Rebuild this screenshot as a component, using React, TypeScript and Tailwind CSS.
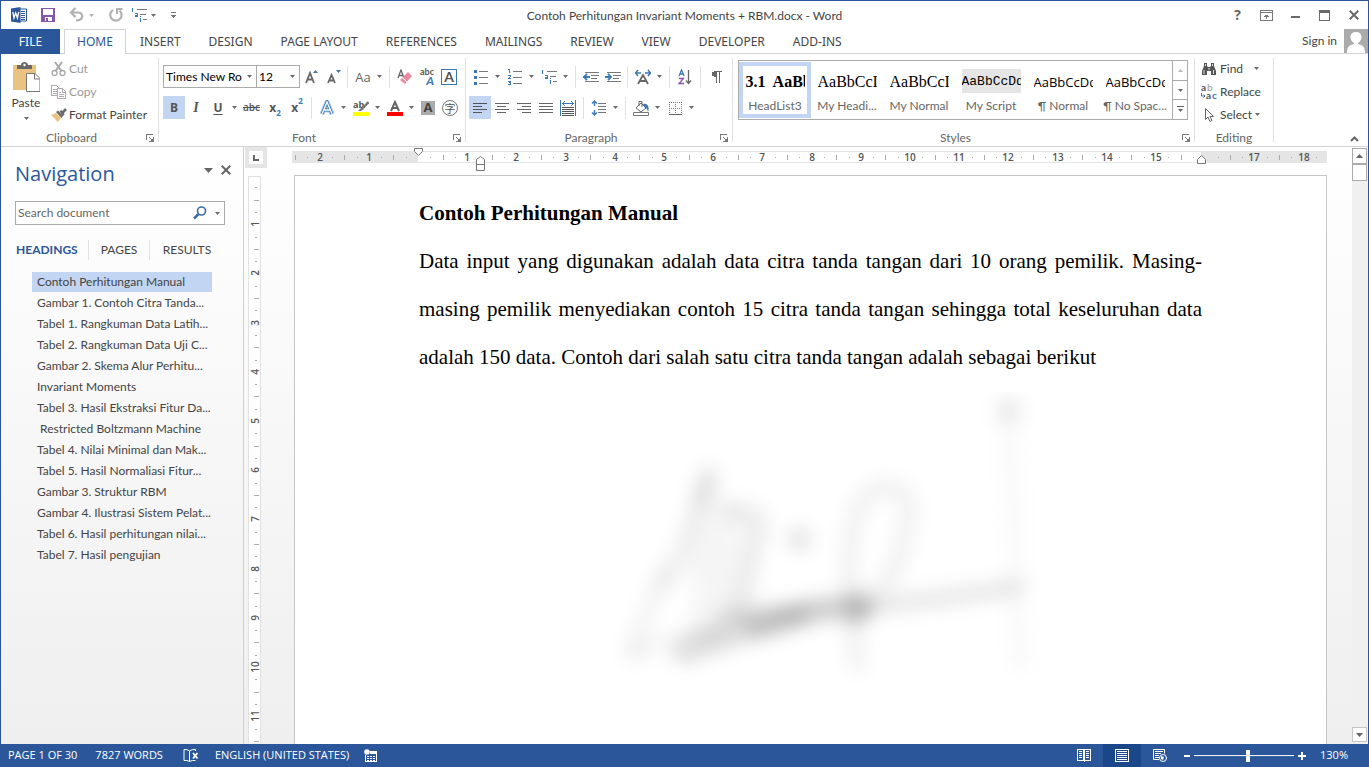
import type { ReactNode } from "react";
import { clsx } from "clsx";

const menuTabs = [
	"INSERT",
	"DESIGN",
	"PAGE LAYOUT",
	"REFERENCES",
	"MAILINGS",
	"REVIEW",
	"VIEW",
	"DEVELOPER",
	"ADD-INS",
];

const headings = [
	"Contoh Perhitungan Manual",
	"Gambar 1. Contoh Citra Tanda...",
	"Tabel 1. Rangkuman Data Latih...",
	"Tabel 2. Rangkuman Data Uji C...",
	"Gambar 2. Skema Alur Perhitu...",
	"Invariant Moments",
	"Tabel 3. Hasil Ekstraksi Fitur Da...",
	" Restricted Boltzmann Machine",
	"Tabel 4. Nilai Minimal dan Mak...",
	"Tabel 5. Hasil Normaliasi Fitur...",
	"Gambar 3. Struktur RBM",
	"Gambar 4. Ilustrasi Sistem Pelat...",
	"Tabel 6. Hasil perhitungan nilai...",
	"Tabel 7. Hasil pengujian",
];

const styleItems = [
	{ name: "HeadList3", sample: "3.1  AaBbCc", look: "font-['Liberation_Serif',serif] text-base font-bold" },
	{ name: "My Headi...", sample: "AaBbCcI", look: "font-['Liberation_Serif',serif] text-base" },
	{ name: "My Normal", sample: "AaBbCcI", look: "font-['Liberation_Serif',serif] text-base" },
	{ name: "My Script", sample: "AaBbCcDd", look: "font-['Liberation_Mono',monospace] text-[13px] bg-[#e5e5e5]" },
	{ name: "¶ Normal", sample: "AaBbCcDd", look: "font-['Open_Sans',sans-serif] text-[13px]" },
	{ name: "¶ No Spac...", sample: "AaBbCcDd", look: "font-['Open_Sans',sans-serif] text-[13px]" },
];

function Pic({ children, w = 16, h = 16, crisp = true }: { children: ReactNode; w?: number; h?: number; crisp?: boolean }) {
	return (
		<svg
			width={w}
			height={h}
			viewBox={`0 0 ${w} ${h}`}
			fill="none"
			className="shrink-0"
			shapeRendering={crisp ? "crispEdges" : "auto"}
			aria-hidden="true"
		>
			{children}
		</svg>
	);
}

function Caret({ color = "#6a6a6a" }: { color?: string }) {
	return (
		<Pic w={5} h={3} crisp={false}>
			<path d="M0 0h5L2.5 3z" fill={color} />
		</Pic>
	);
}

function Sep() {
	return <div className="h-[22px] w-px bg-[#e1e1e1]" />;
}

function Tool({ label, active, children }: { label: string; active?: boolean; children: ReactNode }) {
	return (
		<button
			aria-label={label}
			className={clsx("flex h-[23px] w-[22px] items-center justify-center", active && "bg-[#c2d5f2]")}
		>
			{children}
		</button>
	);
}

function SplitTool({ label, children }: { label: string; children: ReactNode }) {
	return (
		<button aria-label={label} className="flex h-[23px] w-[34px] items-center justify-center gap-1.5">
			{children}
			<Caret />
		</button>
	);
}

function Group({ label, launcher = true, className, children }: { label: string; launcher?: boolean; className?: string; children: ReactNode }) {
	return (
		<>
			<section className={clsx("flex flex-col justify-between", className)}>
				{children}
				<div className="flex h-4 items-center">
					<span className="flex-1 text-center leading-4 text-[#666]">{label}</span>
					{launcher && (
						<button aria-label={`${label} settings`} className="flex w-4 justify-center">
							<Pic w={8} h={8}>
								<path d="M.5 6V.5H7M3 3l3 3M7.500 3v4.500H3" stroke="#777" />
								<path d="M4 7h3V4z" fill="#777" />
							</Pic>
						</button>
					)}
				</div>
			</section>
			<div className="my-1 w-px bg-[#e1e1e1]" />
		</>
	);
}

function MultiLevelIcon() {
	return (
		<Pic>
			<path d="M6 2.500h10M9 7.500h6M12 12.500h4" stroke="#777" />
			<path d="M1 1.500h1M1.500 1v4M4 6.500h3M6.500 7v3M4 8.500h2M4 9.500h3M9.500 11v4M9.500 9v1" stroke="#3c78b4" />
		</Pic>
	);
}

function TitleBar() {
	return (
		<header className="grid h-7 grid-cols-[1fr_auto_1fr] items-center">
			<div className="flex items-center pl-2.5">
				<Pic crisp={false}>
					<path d="M7 2h8.500v12H7z" fill="#fff" stroke="#2b579a" />
					<path d="M10 4.500h4M10 6.500h4M10 8.500h4M10 10.500h4M10 12.500h4" stroke="#2b579a" />
					<path d="M0 1.500L9.500 0v16L0 14.500z" fill="#2b579a" />
					<path d="M1.800 5l1.200 6 1.700-5 1.700 5 1.300-6" stroke="#fff" strokeWidth="1.300" />
				</Pic>
				<button aria-label="Save" className="ml-[13px]">
					<Pic>
						<path d="M1 1h14v14H1z" fill="#8657a8" />
						<path d="M3 2h10v6H3zM5 10h7v4H8v-3H6v3H5z" fill="#fff" />
					</Pic>
				</button>
				<button aria-label="Undo" className="ml-[13px] flex items-center gap-1">
					<Pic crisp={false}>
						<path d="M6.500 1L2 5.500 6.500 10M2.500 5.500H9c6 0 6 7.500-2 8" stroke="#b2b2b2" strokeWidth="2.200" />
					</Pic>
					<Caret color="#b2b2b2" />
				</button>
				<button aria-label="Repeat" className="ml-3.5">
					<Pic crisp={false}>
						<path d="M11.500 3.500A5.700 5.700 0 1 1 5 3" stroke="#b2b2b2" strokeWidth="2.200" />
						<path d="M9 1v6M8.500 2h6" stroke="#b2b2b2" strokeWidth="2" />
					</Pic>
				</button>
				<button aria-label="Multilevel list" className="ml-[7px] flex items-center gap-1">
					<MultiLevelIcon />
					<Caret />
				</button>
				<button aria-label="Customize toolbar" className="ml-[15px]">
					<Pic w={5} h={6}>
						<path d="M0 .5h5" stroke="#777" />
						<path d="M0 3h5L2.500 6z" fill="#777" />
					</Pic>
				</button>
			</div>
			<h1 className="pt-0.5 text-[#444]">Contoh Perhitungan Invariant Moments + RBM.docx - Word</h1>
			<div className="flex justify-end text-[#666]">
				<button aria-label="Help" className="w-[29px] font-['Open_Sans',sans-serif] text-sm font-bold">
					?
				</button>
				<button aria-label="Ribbon display options" className="flex w-[29px] items-center justify-center">
					<Pic w={13} h={11}>
						<path d="M.5.5h12v10H.5zM0 2.500h13M6.500 5v4M4 6.500h5M5 5.500h3" stroke="#777" />
					</Pic>
				</button>
				<button aria-label="Minimize" className="flex w-[29px] items-center justify-center">
					<Pic w={9} h={11}>
						<path d="M0 7h9" stroke="#6a6a6a" strokeWidth="2" />
					</Pic>
				</button>
				<button aria-label="Maximize" className="flex w-[29px] items-center justify-center">
					<Pic w={11} h={11}>
						<path d="M.5 1v9.500h10V1" stroke="#6a6a6a" />
						<path d="M0 1.500h11" stroke="#6a6a6a" strokeWidth="3" />
					</Pic>
				</button>
				<button aria-label="Close" className="flex w-[29px] items-center justify-center">
					<Pic w={10} h={10} crisp={false}>
						<path d="M.7.7l8.600 8.600M9.300.7L.7 9.300" stroke="#6a6a6a" strokeWidth="2" />
					</Pic>
				</button>
			</div>
		</header>
	);
}

function MenuTabs() {
	return (
		<nav className="flex h-[25px] items-stretch font-['Noto_Sans',sans-serif] text-[#444]">
			<button className="w-[59px] bg-[#2b579a] text-white">FILE</button>
			<div className="w-1 border-b border-[#d4d4d4]" />
			<button className="w-[62px] border border-b-0 border-[#d4d4d4] text-[#2b579a]">HOME</button>
			<div className="flex flex-1 items-stretch border-b border-[#d4d4d4]">
				{menuTabs.map((tab) => (
					<button key={tab} className="px-3.5 pt-px">
						{tab}
					</button>
				))}
				<a href="#signin" className="ml-auto self-center pr-[7px] font-['Lato',sans-serif]">
					Sign in
				</a>
				<svg width="24" height="24" viewBox="0 0 24 24" aria-hidden="true">
					<path d="M0 0h24v24H0z" fill="#ababab" />
					<path d="M3 24c0-6 2-8 7-9v-1C5 11 5 3 12 3s7 8 2 11v1c5 1 7 3 7 9z" fill="#fff" />
				</svg>
			</div>
		</nav>
	);
}

function ClipboardGroup() {
	return (
		<Group label="Clipboard" className="w-[157px]">
			<div className="flex pt-[3px]">
				<button className="flex w-[50px] flex-col items-center pt-[5px]">
					<Pic w={28} h={31} crisp={false}>
						<path d="M1 3h23v25H1z" fill="#eac282" />
						<path d="M5 7V3h4c0-4 7-4 7 0h4v4z" fill="#6a6a6a" />
						<circle cx="12.500" cy="3" r="1.200" fill="#fff" />
						<path d="M14.500 11.500h8.500l5 5v13H14.500z" fill="#fff" stroke="#777" />
						<path d="M22.500 12v5h5" stroke="#777" />
					</Pic>
					<span className="mt-0.5 mb-1.5 leading-4">Paste</span>
					<Caret />
				</button>
				<div className="flex flex-col items-start">
					<button className="flex h-[23px] items-center gap-0.5 text-[#999]">
						<Pic crisp={false}>
							<path d="M4 1l6.500 9M11 1L4.500 10" stroke="#a8a8a8" strokeWidth="2" />
							<circle cx="3.500" cy="12" r="2.500" stroke="#a8a8a8" strokeWidth="1.300" />
							<circle cx="11.500" cy="12" r="2.500" stroke="#a8a8a8" strokeWidth="1.300" />
						</Pic>
						Cut
					</button>
					<button className="flex h-[23px] items-center gap-0.5 text-[#999]">
						<Pic>
							<path d="M.5 1.500h5l3 3v7h-8zM2 5.500h4M2 7.500h4M2 9.500h4" stroke="#b5a8b5" />
							<path d="M6.500 4.500h5l3 3v7h-8z" fill="#fff" stroke="#b5a8b5" />
							<path d="M11.500 5v3h3M8 8.500h2M8 10.500h5M8 12.500h5" stroke="#b5a8b5" />
						</Pic>
						Copy
					</button>
					<button className="flex h-[23px] items-center gap-0.5">
						<Pic crisp={false}>
							<path d="M0 8l5-2 5 5-3 4z" fill="#eac282" />
							<path d="M5 5l2-1.500L12 9l-1.500 2zM8.500 4.500L10 3l1.500 1L14 1l2 2-3 3 .5 1.500L12 9z" fill="#6a6a6a" />
						</Pic>
						Format Painter
					</button>
				</div>
			</div>
		</Group>
	);
}

function FontGroup() {
	return (
		<Group label="Font" className="w-[306px]">
			<div className="flex flex-col gap-2 pt-[11px] pl-1">
				<div className="flex items-center">
					<div className="relative">
						<select aria-label="Font name" className="h-[23px] w-[94px] appearance-none border border-[#ababab] bg-white pr-3.5 pl-0.5 text-black">
							<option>Times New Roman</option>
						</select>
						<span className="pointer-events-none absolute inset-y-0 right-[5px] flex items-center">
							<Caret />
						</span>
					</div>
					<div className="relative -ml-px">
						<select aria-label="Font size" className="h-[23px] w-[44px] appearance-none border border-[#ababab] bg-white pr-3.5 pl-0.5 text-black">
							<option>12</option>
						</select>
						<span className="pointer-events-none absolute inset-y-0 right-[5px] flex items-center">
							<Caret />
						</span>
					</div>
					<Tool label="Grow font">
						<Pic crisp={false}>
							<path d="M3 14L7 4l4 10M4.500 10.500h5" stroke="#666" strokeWidth="1.800" />
							<path d="M10 4l2.500-3L15 4z" fill="#3c78b4" />
						</Pic>
					</Tool>
					<Tool label="Shrink font">
						<Pic crisp={false}>
							<path d="M3 14l3.500-8L10 14M4.500 11.500h4" stroke="#666" strokeWidth="1.800" />
							<path d="M11 1h5l-2.500 3z" fill="#3c78b4" />
						</Pic>
					</Tool>
					<div className="w-[3px]" />
					<Sep />
					<button aria-label="Change case" className="flex w-[41px] items-center justify-center gap-1.5 font-['Open_Sans',sans-serif] text-[13px] leading-5 text-[#666]">
						Aa
						<Caret />
					</button>
					<Sep />
					<div className="w-1" />
					<Tool label="Clear formatting">
						<Pic crisp={false}>
							<path d="M1 9l3-8 3 8M2 6.500h4" stroke="#666" strokeWidth="1.300" />
							<path d="M11 3l4 4-7 8-5-4z" fill="#e88ba0" />
							<path d="M5 8.500l5 4.500" stroke="#fff" />
						</Pic>
					</Tool>
					<Tool label="Phonetic guide">
						<span className="flex flex-col items-end text-[#555]">
							<span className="text-[9px] leading-[8px] font-bold">abc</span>
							<b className="text-xs leading-[10px] text-[#3c78b4] italic">A</b>
						</span>
					</Tool>
					<Tool label="Character border">
						<span className="flex size-4 items-center justify-center border border-[#3c78b4] text-sm font-bold text-[#555]">A</span>
					</Tool>
				</div>
				<div className="flex items-center font-['Open_Sans',sans-serif] text-[#555]">
					<Tool label="Bold" active>
						<b className="text-xs">B</b>
					</Tool>
					<Tool label="Italic">
						<i className="font-['Liberation_Serif',serif] text-sm font-bold">I</i>
					</Tool>
					<Tool label="Underline">
						<b className="text-xs underline underline-offset-2">U</b>
					</Tool>
					<button aria-label="Underline style" className="flex w-2.5 justify-center">
						<Caret />
					</button>
					<button className="w-[25px] text-[10px] font-semibold line-through">abc</button>
					<Tool label="Subscript">
						<b className="text-xs">x</b>
						<b className="self-end text-[8px] text-[#3c78b4]">2</b>
					</Tool>
					<Tool label="Superscript">
						<b className="text-xs">x</b>
						<b className="self-start text-[8px] text-[#3c78b4]">2</b>
					</Tool>
					<div className="w-[3px]" />
					<Sep />
					<div className="w-[3px]" />
					<SplitTool label="Text effects">
						<Pic crisp={false}>
							<path d="M3 14L8 2l5 12M5 10h6" stroke="#b4cdea" strokeWidth="5" />
							<path d="M3 14L8 2l5 12M5 10h6" stroke="#3c78b4" strokeWidth="3" />
							<path d="M3 14L8 2l5 12M5 10h6" stroke="#fff" strokeWidth="1.300" />
						</Pic>
					</SplitTool>
					<SplitTool label="Highlight color">
						<Pic crisp={false}>
							<text x="0" y="8" fontSize="9" fontWeight="700" fill="#555">
								ab
							</text>
							<path d="M15.500 2L10 8" stroke="#777" strokeWidth="2.500" />
							<path d="M5 11l4-4 2 2-3 2z" fill="#777" />
							<path d="M0 12h16v4H0z" fill="#ff0" />
						</Pic>
					</SplitTool>
					<SplitTool label="Font color">
						<Pic crisp={false}>
							<path d="M4 11l4-9 4 9M5.500 8h5" stroke="#666" strokeWidth="2" />
							<path d="M0 12h16v4H0z" fill="#f00" />
						</Pic>
					</SplitTool>
					<Tool label="Character shading">
						<span className="flex size-3.5 items-center justify-center bg-[#ababab] text-[13px] font-bold text-[#444]">A</span>
					</Tool>
					<Tool label="Enclose characters">
						<span className="flex size-4 items-center justify-center rounded-full border border-[#777] font-['Noto_Sans_CJK_SC',sans-serif] text-[11px] leading-3">
							字
						</span>
					</Tool>
				</div>
			</div>
		</Group>
	);
}

function ParagraphGroup() {
	return (
		<Group label="Paragraph" className="w-[266px]">
			<div className="flex flex-col gap-2 pt-[11px] pl-[3px]">
				<div className="flex items-center">
					<SplitTool label="Bullets">
						<Pic>
							<path d="M6 2.500h9M6 8.500h9M6 14.500h9" stroke="#777" />
							<path d="M1 1h3v3H1zM1 7h3v3H1zM1 13h3v3H1z" fill="#3c78b4" />
						</Pic>
					</SplitTool>
					<SplitTool label="Numbering">
						<Pic>
							<path d="M6 2.500h9M6 8.500h9M6 14.500h9" stroke="#777" />
							<path d="M1 .5h1M2.500 0v4M1 6.500h3M3.500 7v1M2.500 8v1M1 9.500h3M1 12.500h3M3.500 12v4M2 13.500h1M1 15.500h3" stroke="#3c78b4" />
						</Pic>
					</SplitTool>
					<SplitTool label="Multilevel list">
						<MultiLevelIcon />
					</SplitTool>
					<div className="w-1" />
					<Sep />
					<div className="w-1" />
					<Tool label="Decrease indent">
						<Pic crisp={false}>
							<path d="M2 3.500h14M8 6.500h8M8 9.500h6M2 12.500h14" stroke="#777" />
							<path d="M0 8h7M4 4.800L1 8l3 3.200" stroke="#3c78b4" strokeWidth="1.800" />
						</Pic>
					</Tool>
					<Tool label="Increase indent">
						<Pic crisp={false}>
							<path d="M2 3.500h14M8 6.500h8M8 9.500h6M2 12.500h14" stroke="#777" />
							<path d="M0 8h6M3 4.800L6 8l-3 3.200" stroke="#3c78b4" strokeWidth="1.800" />
						</Pic>
					</Tool>
					<div className="w-[3px]" />
					<Sep />
					<div className="w-[3px]" />
					<SplitTool label="Asian layout">
						<Pic crisp={false}>
							<path d="M3 15l5-9 5 9M5 12h6" stroke="#666" strokeWidth="1.800" />
							<path d="M0 4h6M3 1L.5 4 3 7M10 4h6M13 1l2.500 3L13 7" stroke="#3c78b4" strokeWidth="1.400" />
						</Pic>
					</SplitTool>
					<div className="w-1" />
					<Sep />
					<button aria-label="Sort" className="flex w-[30px] justify-center">
						<Pic crisp={false}>
							<path d="M2 7l2.500-6L7 7M3 5h3" stroke="#3c78b4" strokeWidth="1.300" />
							<path d="M2 9.500h4.500L2 14.500h5" stroke="#8657a8" strokeWidth="1.300" />
							<path d="M11.500 1v13M9 11.500l2.500 3 2.500-3" stroke="#666" strokeWidth="1.300" />
						</Pic>
					</button>
					<Sep />
					<button aria-label="Show paragraph marks" className="flex w-[30px] justify-center">
						<Pic>
							<path d="M6 2h8v1H6z" fill="#666" />
							<path d="M8.500 2v12M11.500 2v12" stroke="#666" />
							<path d="M8 2v6C2 8 2 2 8 2z" fill="#666" />
						</Pic>
					</button>
				</div>
				<div className="flex items-center">
					<Tool label="Align left" active>
						<Pic>
							<path d="M1 3.500h14M1 6.500h9M1 9.500h14M1 12.500h9" stroke="#555" />
						</Pic>
					</Tool>
					<Tool label="Center">
						<Pic>
							<path d="M1 3.500h14M3 6.500h9M1 9.500h14M3 12.500h9" stroke="#666" />
						</Pic>
					</Tool>
					<Tool label="Align right">
						<Pic>
							<path d="M1 3.500h14M6 6.500h9M1 9.500h14M6 12.500h9" stroke="#666" />
						</Pic>
					</Tool>
					<Tool label="Justify">
						<Pic>
							<path d="M1 3.500h14M1 6.500h14M1 9.500h14M1 12.500h14" stroke="#666" />
						</Pic>
					</Tool>
					<Tool label="Distribute">
						<Pic>
							<path d="M.5 0v16M15.500 0v16M3 3.500h10M5 1L3 3.500 5 6M11 1l2 2.500L11 6" stroke="#3c78b4" />
							<path d="M2 7.500h12M2 9.500h12M2 11.500h12M2 13.500h12M2 15.500h12" stroke="#555" />
						</Pic>
					</Tool>
					<div className="w-1" />
					<Sep />
					<div className="w-[3px]" />
					<SplitTool label="Line spacing">
						<Pic crisp={false}>
							<path d="M7 3.500h8M7 6.500h8M7 9.500h8M7 12.500h8" stroke="#777" />
							<path d="M3.500 1v5M3.500 10v5M1 3.500L3.500 1 6 3.500M1 12.500L3.500 15 6 12.500" stroke="#3c78b4" strokeWidth="1.400" />
						</Pic>
					</SplitTool>
					<div className="w-1" />
					<Sep />
					<div className="w-[3px]" />
					<SplitTool label="Shading">
						<Pic crisp={false}>
							<path d="M3 8l5-5 5 5-5 4zM6 6V1.500h3V7" stroke="#666" />
							<path d="M10 4c4-1 7 2 5 8-1-3-1-4-3-4z" fill="#3c78b4" />
							<path d="M.5 12.500h15v3H.5z" fill="#fff" stroke="#777" />
						</Pic>
					</SplitTool>
					<SplitTool label="Borders">
						<Pic>
							<path d="M2 2.500h13M2 8.500h13M2.500 2v12M8.500 2v12M14.500 2v12" stroke="#777" strokeDasharray="1 1" />
							<path d="M2 14.500h13" stroke="#666" />
						</Pic>
					</SplitTool>
				</div>
			</div>
		</Group>
	);
}

function StylesGroup() {
	return (
		<Group label="Styles" className="w-[461px]">
			<div className="px-[5px] pt-1.5">
				<div className="flex h-[60px] w-[450px] border border-[#ababab]">
					{styleItems.map((item, i) => (
						<button
							key={item.name}
							className={clsx(
								"my-px flex w-[72px] flex-col items-center border-4 px-[3px] pt-[3px]",
								i === 0 ? "border-[#c2d5f2]" : "border-transparent",
							)}
						>
							<span className={clsx("h-[26px] w-[59px] overflow-hidden leading-[26px] whitespace-pre text-black", item.look)}>
								{item.sample}
							</span>
							<span className="mt-[5px] leading-4 whitespace-nowrap text-[#666]">{item.name}</span>
						</button>
					))}
					<div className="ml-auto flex w-[15px] flex-col divide-y divide-[#ababab] border-l border-[#ababab]">
						<button aria-label="Previous styles" className="flex flex-1 items-center justify-center">
							<Pic w={5} h={3} crisp={false}>
								<path d="M0 3h5L2.500 0z" fill="#b9b9b9" />
							</Pic>
						</button>
						<button aria-label="Next styles" className="flex flex-1 items-center justify-center">
							<Caret />
						</button>
						<button aria-label="More styles" className="flex flex-1 items-center justify-center">
							<Pic w={7} h={7} crisp={false}>
								<path d="M0 .5h7" stroke="#666" />
								<path d="M1 3h5L3.500 6z" fill="#666" />
							</Pic>
						</button>
					</div>
				</div>
			</div>
		</Group>
	);
}

function EditingGroup() {
	return (
		<Group label="Editing" launcher={false} className="w-[78px]">
			<div className="flex flex-col items-start pt-[3px] pl-1.5">
				<button className="flex h-[23px] items-center gap-[3px]">
					<Pic crisp={false}>
						<path d="M3 2h3v3l1 1h2l1-1V2h3v3l2 5v4h-5v-4H6v4H1v-4l2-5z" fill="#555" />
						<path d="M4.500 3v2M11.500 3v2M3 9v4M12.500 9v4M8 7v2" stroke="#fff" strokeWidth=".8" />
					</Pic>
					<span className="mr-2">Find</span>
					<Caret />
				</button>
				<button className="flex h-[23px] items-center gap-[3px]">
					<Pic crisp={false}>
						<g fontSize="10" fontWeight="700">
							<text x="0" y="7" fill="#555">
								a
							</text>
							<text x="6" y="7" fill="#ababab">
								b
							</text>
							<text x="5" y="15" fill="#555">
								a
							</text>
							<text x="11" y="15" fill="#3c78b4">
								c
							</text>
						</g>
						<path d="M.5 9v3H4M2.500 10.500L4 12l-1.500 1.500" stroke="#3c78b4" />
					</Pic>
					Replace
				</button>
				<button className="flex h-[23px] items-center gap-[3px]">
					<Pic crisp={false}>
						<path d="M4.500 1.500v11l2.500-2.500 2 4.500 2-1-2-4h3.500z" fill="#fff" stroke="#666" />
					</Pic>
					Select
					<Caret />
				</button>
			</div>
		</Group>
	);
}

function NavigationPane() {
	return (
		<aside className="flex w-[243px] shrink-0 flex-col border-r border-[#cfcfcf] pl-3.5">
			<div className="flex items-center pt-[11px]">
				<h2 className="flex-1 font-['Open_Sans',sans-serif] text-xl leading-8 text-[#2b579a]">Navigation</h2>
				<div className="mb-2 flex items-center gap-2 pr-3">
					<button aria-label="Pane options">
						<Pic w={9} h={5} crisp={false}>
							<path d="M0 0h9L4.500 5z" fill="#666" />
						</Pic>
					</button>
					<button aria-label="Close pane">
						<Pic w={10} h={10} crisp={false}>
							<path d="M.7.7l8.600 8.600M9.300.7L.7 9.300" stroke="#666" strokeWidth="2" />
						</Pic>
					</button>
				</div>
			</div>
			<div className="mt-[11px] mr-[18px] flex h-6 items-center border border-[#ababab] bg-white">
				<input aria-label="Search document" placeholder="Search document" className="min-w-0 flex-1 pl-0.5 outline-none placeholder:text-[#666]" />
				<button aria-label="Search">
					<Pic w={14} h={14} crisp={false}>
						<circle cx="8.500" cy="5" r="4" stroke="#3c6ca8" strokeWidth="1.600" />
						<path d="M5.500 8L1 12.500" stroke="#3c6ca8" strokeWidth="2.500" />
					</Pic>
				</button>
				<button aria-label="Search options" className="pr-1 pl-2">
					<Caret />
				</button>
			</div>
			<div role="tablist" className="mt-[15px] flex h-5 items-center text-[#444]">
				<button role="tab" aria-selected="true" className="w-[73px] pl-px text-left font-bold text-[#2b579a]">
					HEADINGS
				</button>
				<div className="h-5 w-px bg-[#e1e1e1]" />
				<button role="tab" className="w-[60px]">
					PAGES
				</button>
				<div className="h-5 w-px bg-[#e1e1e1]" />
				<button role="tab" className="w-[74px]">
					RESULTS
				</button>
			</div>
			<ul className="mt-3 ml-[17px] flex w-[180px] flex-col gap-px text-[#444]">
				{headings.map((text, i) => (
					<li key={text}>
						<button className={clsx("h-5 w-full pl-[5px] text-left leading-5 whitespace-pre", i === 0 && "bg-[#c2d5f2]")}>
							{text}
						</button>
					</li>
				))}
			</ul>
		</aside>
	);
}

// one centimetre on the rulers at 130% zoom
const CM = 49.2;

function HorizontalRuler() {
	const origin = 126;
	const quarters = Array.from({ length: 85 }, (_, i) => i - 10);
	return (
		<svg width="1035" height="26" className="shrink-0 font-['Open_Sans',sans-serif] text-[10px] font-semibold" aria-hidden="true">
			<path d="M0 4h1035v12H0z" fill="#e5e5e5" />
			<path d="M126 5h783v10H126z" fill="#fff" />
			{quarters.map((q) => {
				const x = Math.round(origin + (q * CM) / 4);
				if (q === 0 || q === 64 || x > 1028) return null;
				if (q % 4 === 0)
					return (
						<text key={q} x={x} y="14" textAnchor="middle" fill="#555">
							{Math.abs(q / 4)}
						</text>
					);
				return q % 2 === 0 ? (
					<rect key={q} x={x} y="8" width="1" height="5" fill="#aaa" />
				) : (
					<rect key={q} x={x} y="10" width="1" height="1" fill="#aaa" />
				);
			})}
			<g fill="#fff" stroke="#777">
				<path d="M122.500 1.500h8v3l-4 4-4-4z" />
				<path d="M184.500 23.500v-11l4-3 4 3v11zM184.500 17.500h8" />
				<path d="M905.500 16.500v-4l4-4 4 4v4z" />
			</g>
		</svg>
	);
}

function VerticalRuler() {
	const quarters = Array.from({ length: 46 }, (_, i) => i + 1);
	return (
		<svg width="13" height="567" className="font-['Open_Sans',sans-serif] text-[10px] font-semibold" aria-hidden="true">
			<path d="M0 0h13v567H0z" fill="#e1e1e1" />
			<path d="M1 1h11v566H1z" fill="#fff" />
			{quarters.map((q) => {
				const y = Math.round((q * CM) / 4) - 1;
				if (q % 4 === 0)
					return (
						<text key={q} transform={`translate(11 ${y}) rotate(-90)`} textAnchor="middle" fill="#555">
							{q / 4}
						</text>
					);
				return q % 2 === 0 ? (
					<rect key={q} x="6" y={y} width="5" height="1" fill="#aaa" />
				) : (
					<rect key={q} x="7" y={y} width="2" height="1" fill="#aaa" />
				);
			})}
		</svg>
	);
}

function Signature() {
	return (
		<svg viewBox="0 0 450 310" width="450" height="310" fill="none" strokeLinecap="round" role="img" aria-label="Contoh citra tanda tangan">
			<defs>
				<filter id="soft" x="-20%" y="-20%" width="140%" height="140%">
					<feGaussianBlur stdDeviation="9" />
				</filter>
				<clipPath id="frame">
					<path d="M0 11h450v299H0z" />
				</clipPath>
			</defs>
			<g clipPath="url(#frame)">
				<g filter="url(#soft)" stroke="#000">
					<path d="M106 98Q92 150 66 195T34 272" strokeWidth="18" strokeOpacity=".045" />
					<path d="M110 94L103 114" strokeWidth="18" strokeOpacity=".08" />
					<path d="M70 190l-10 14" strokeWidth="14" strokeOpacity=".055" />
					<path d="M135 130Q165 135 155 155Q145 190 140 235" strokeWidth="22" strokeOpacity=".075" />
					<path d="M108 130L100 180M118 140L110 245" strokeWidth="40" strokeOpacity=".04" />
					<path d="M34 270Q80 255 120 245" strokeWidth="14" strokeOpacity=".045" />
					<path d="M85 270Q140 250 190 236T260 229" strokeWidth="26" strokeOpacity=".12" />
					<path d="M155 247L200 235" strokeWidth="20" strokeOpacity=".13" />
					<path d="M125 234Q200 230 260 226Q330 220 415 206" strokeWidth="18" strokeOpacity=".085" />
					<path d="M199 158h1" strokeWidth="24" strokeOpacity=".1" />
					<path d="M258 282Q245 200 252 150Q262 106 285 106Q316 108 306 145Q298 200 265 225" strokeWidth="18" strokeOpacity=".055" />
					<path d="M258 218v15" strokeWidth="22" strokeOpacity=".09" />
					<path d="M408 29h1" strokeWidth="26" strokeOpacity=".07" />
					<path d="M408 35Q416 160 420 280" strokeWidth="20" strokeOpacity=".018" />
				</g>
			</g>
		</svg>
	);
}

function DocumentArea() {
	return (
		<div className="flex min-w-0 flex-1 overflow-hidden">
			<div className="flex w-[50px] shrink-0 flex-col items-start">
				<div className="ml-px flex h-[21px] w-[22px] items-center justify-center border-4 border-[#e5e5e5] bg-white">
					<Pic w={6} h={6}>
						<path d="M1 0v5h5" stroke="#666" strokeWidth="2" />
					</Pic>
				</div>
				<div className="mt-2 ml-1 overflow-hidden">
					<VerticalRuler />
				</div>
			</div>
			<div className="flex min-w-0 flex-1 flex-col">
				<div className="-ml-0.5 flex h-7 overflow-hidden">
					<HorizontalRuler />
				</div>
				<main className="mr-[25px] flex-1 overflow-hidden border border-b-0 border-[#c6c6c6] bg-white px-[124px] pt-[13px] font-['Liberation_Serif','Times_New_Roman',serif] text-[21px] leading-[48px] text-black">
					<h2 className="font-bold">Contoh Perhitungan Manual</h2>
					<p className="text-justify">
						Data input yang digunakan adalah data citra tanda tangan dari 10 orang pemilik. Masing-masing
						pemilik menyediakan contoh 15 citra tanda tangan sehingga total keseluruhan data adalah 150 data.
						Contoh dari salah satu citra tanda tangan adalah sebagai berikut
					</p>
					<div className="flex justify-center pl-7">
						<Signature />
					</div>
				</main>
			</div>
			<div className="mt-px flex w-4 shrink-0 flex-col bg-[#f0f0f0]">
				<button aria-label="Scroll up" className="flex h-4 w-[15px] items-center justify-center border border-[#ababab] bg-white">
					<Pic w={7} h={4} crisp={false}>
						<path d="M0 4h7L3.500 0z" fill="#666" />
					</Pic>
				</button>
				<div className="h-[17px] w-[15px] border border-[#ababab] bg-white" />
				<button aria-label="Scroll down" className="mt-auto mb-0.5 flex h-[15px] w-[15px] items-center justify-center border border-[#c6c6c6] bg-white">
					<Pic w={7} h={4} crisp={false}>
						<path d="M0 0h7L3.500 4z" fill="#666" />
					</Pic>
				</button>
			</div>
		</div>
	);
}

function StatusBar() {
	return (
		<footer className="flex h-[23px] shrink-0 items-center bg-[#2b579a] pl-[7px] font-['Open_Sans',sans-serif] text-[11px] text-white">
			<span>PAGE 1 OF 30</span>
			<span className="ml-[18px]">7827 WORDS</span>
			<button aria-label="Proofing" className="ml-5">
				<Pic crisp={false}>
					<path d="M6.500 13.500V3Q4 1 1 1.500v11Q4 12 6.500 13.500zm0-10.500Q9 1 12.500 1.500V3M6.500 13.500Q9 12 12.500 12.500" stroke="#fff" />
					<path d="M10 5l4.500 5.500M14.500 5L10 10.500" stroke="#fff" strokeWidth="1.800" />
				</Pic>
			</button>
			<button className="ml-4">ENGLISH (UNITED STATES)</button>
			<button aria-label="Macro recording" className="ml-[15px]">
				<Pic w={14} h={14}>
					<path d="M6 2h7v3H6z" fill="#fff" />
					<path d="M1.500 6v6.500h11V4M3 7.500h2M6 7.500h2M9 7.500h2M3 9.500h2M6 9.500h2M9 9.500h2M3 11.500h2M6 11.500h2M9 11.500h2" stroke="#fff" />
					<circle cx="3" cy="3" r="2.800" fill="#fff" shapeRendering="auto" />
				</Pic>
			</button>
			<div className="ml-auto flex items-center self-stretch">
				<button aria-label="Read mode" className="mr-[11px]">
					<Pic>
						<path d="M1.500 1.500h6v11h-6zM8.500 1.500h6v11h-6zM3 3.500h3M3 5.500h3M3 7.500h3M3 9.500h3M10 3.500h3M10 5.500h3M10 7.500h3M10 9.500h3M8 12v2" stroke="#fff" />
					</Pic>
				</button>
				<button aria-label="Print layout" className="flex w-[38px] items-center justify-center self-stretch bg-[#19478a]">
					<Pic w={14} h={13}>
						<path d="M.5.5h13v12H.5zM2 2.500h10M2 4.500h10M2 6.500h10M2 8.500h10M2 10.500h10" stroke="#fff" />
					</Pic>
				</button>
				<button aria-label="Web layout" className="ml-3">
					<Pic crisp={false}>
						<path d="M6 11.500H.5V1.500h11v4M2 3.500h8M2 5.500h6M2 7.500h4M2 9.500h4" stroke="#fff" />
						<circle cx="10" cy="10" r="3.500" stroke="#fff" />
						<path d="M8 8l3 1-1 3-2-1z" fill="#fff" />
					</Pic>
				</button>
				<button aria-label="Zoom out" className="ml-[15px]">
					<Pic w={6} h={2}>
						<path d="M0 0h6v2H0z" fill="#fff" />
					</Pic>
				</button>
				<input
					type="range"
					aria-label="Zoom"
					min={0}
					max={100}
					defaultValue={54}
					className="mx-1 h-3 w-[100px] appearance-none bg-linear-to-b from-transparent from-45% via-white via-45% to-transparent to-55% [&::-webkit-slider-thumb]:h-3 [&::-webkit-slider-thumb]:w-1 [&::-webkit-slider-thumb]:appearance-none [&::-webkit-slider-thumb]:bg-white"
				/>
				<button aria-label="Zoom in">
					<Pic w={8} h={8}>
						<path d="M0 4h8M4 0v8" stroke="#fff" strokeWidth="2" />
					</Pic>
				</button>
				<button className="mr-5 w-[42px] text-right">130%</button>
			</div>
		</footer>
	);
}

export default function App() {
	return (
		<div className="flex h-screen flex-col overflow-hidden border-x border-t border-[#2b579a] bg-white font-['Lato','Segoe_UI',sans-serif] text-xs text-[#444]">
			<TitleBar />
			<MenuTabs />
			<div className="flex h-[93px] shrink-0 border-b border-[#d4d4d4]">
				<ClipboardGroup />
				<FontGroup />
				<ParagraphGroup />
				<StylesGroup />
				<EditingGroup />
				<button aria-label="Collapse ribbon" className="mt-auto mr-[9px] mb-1 ml-auto">
					<Pic w={9} h={6} crisp={false}>
						<path d="M1 5l3.500-3.500L8 5" stroke="#666" strokeWidth="2" />
					</Pic>
				</button>
			</div>
			<div className="flex min-h-0 flex-1 bg-linear-to-b from-white to-[#efefef]">
				<NavigationPane />
				<DocumentArea />
			</div>
			<StatusBar />
		</div>
	);
}
